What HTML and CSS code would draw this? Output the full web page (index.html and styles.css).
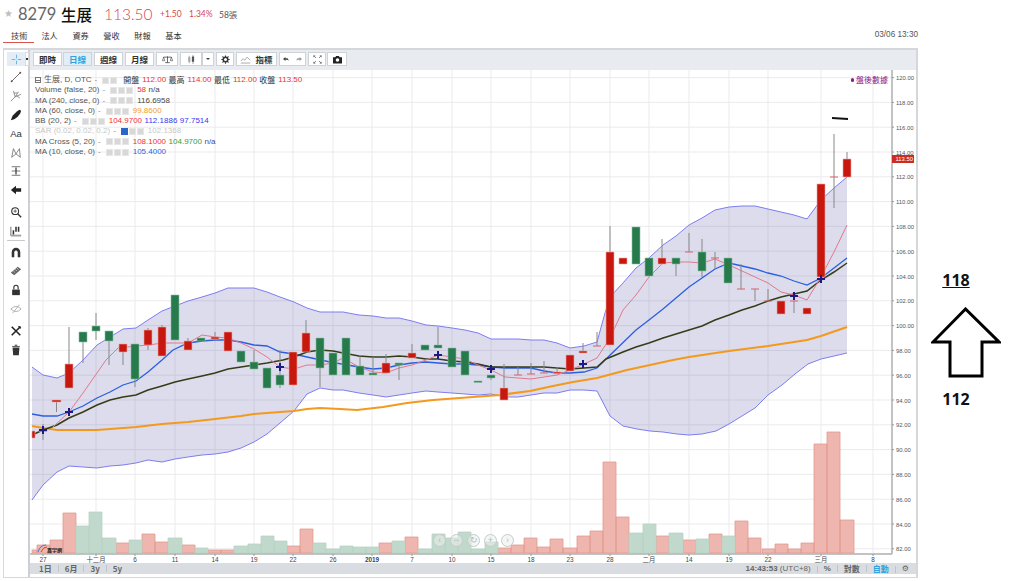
FILE: index.html
```html
<!DOCTYPE html>
<html lang="zh-Hant">
<head>
<meta charset="utf-8">
<title>8279 生展</title>
<link rel="stylesheet" href="styles.css">
</head>
<body>
<div class="page">
  <header class="quote">
    <span class="star">★</span>
    <span class="code">8279</span>
    <span class="name">生展</span>
    <span class="price">113.50</span>
    <span class="chg">+1.50</span>
    <span class="pct">1.34%</span>
    <span class="vol">58張</span>
  </header>
  <nav class="tabs">
    <a class="tab tab-on">技術</a><a class="tab">法人</a><a class="tab">資券</a><a class="tab">營收</a><a class="tab">財報</a><a class="tab">基本</a>
    <span class="stamp">03/06 13:30</span>
  </nav>
  <div class="main">
    <section class="widget">
      <aside class="tools">
        <div class="tool tool-on"><svg viewBox="0 0 14 14" class="ic"><path d="M7 1v4.500M7 8.500V13M1 7h4.500M8.500 7H13" stroke="#5cb4e8" stroke-width="1.200" fill="none"/></svg><span class="caret"></span></div>
        <div class="tool"><svg viewBox="0 0 14 14" class="ic"><path d="M2 12L12 2" stroke="#555" fill="none"/><circle cx="2" cy="12" r="1.100" fill="#555"/><circle cx="12" cy="2" r="1.100" fill="#555"/></svg></div>
        <div class="tool"><svg viewBox="0 0 14 14" class="ic"><path d="M1 13l5-5M6 8L4 1M6 8l4-6M6 8l7-3M4.500 3.500L9 3.500M7.500 6.500l4 3" stroke="#777" stroke-width=".9" fill="none"/></svg></div>
        <div class="tool"><svg viewBox="0 0 14 14" class="ic"><path d="M1 13l2-5 5-5 3-2 2 1-1 3-3 4-4 3z" fill="#222"/></svg></div>
        <div class="tool tool-text">Aa</div>
        <div class="tool"><svg viewBox="0 0 14 14" class="ic"><path d="M2 12L4 2l3 6 4-6 1 10M2 12l5-4 5 4" stroke="#666" stroke-width=".9" fill="none"/></svg></div>
        <div class="tool"><svg viewBox="0 0 14 14" class="ic"><path d="M2 2h10M2 7h10M2 12h10" stroke="#666" fill="none"/><path d="M7 3v8" stroke="#333" stroke-width="1.400"/></svg></div>
        <div class="tool"><svg viewBox="0 0 14 14" class="ic"><path d="M1 7l6-5v3h6v4H7v3z" fill="#222"/></svg></div>
        <div class="tool tool-gap"><svg viewBox="0 0 14 14" class="ic"><circle cx="6" cy="6" r="4" stroke="#333" stroke-width="1.200" fill="none"/><path d="M9 9l4 4" stroke="#333" stroke-width="1.600"/><path d="M4 6h4M6 4v4" stroke="#333" stroke-width=".8"/></svg></div>
        <div class="tool"><svg viewBox="0 0 14 14" class="ic"><path d="M1 2v10h12" stroke="#777" stroke-width="1.200" fill="none"/><path d="M4 6v5M7 2v6M10 2v6" stroke="#333" stroke-width="1.800"/><path d="M1 12h12v1.500H1z" fill="#aaa"/></svg></div>
        <div class="tool-sep"></div>
        <div class="tool"><svg viewBox="0 0 14 14" class="ic"><path d="M2 12V6a5 5 0 0 1 10 0v6H9V6a2 2 0 0 0-4 0v6z" fill="#333"/></svg></div>
        <div class="tool"><svg viewBox="0 0 14 14" class="ic"><path d="M1 9l8-7 4 3-8 7z" fill="#666"/><path d="M4 7l2 2M6 5l2 2M8 3.500l2 2" stroke="#fff" stroke-width=".7"/></svg></div>
        <div class="tool"><svg viewBox="0 0 14 14" class="ic"><path d="M2.500 6.500h9V13h-9z" fill="#333"/><path d="M4.500 6.500V4a2.500 2.500 0 0 1 5 0v2.500" stroke="#333" stroke-width="1.300" fill="none"/></svg></div>
        <div class="tool"><svg viewBox="0 0 14 14" class="ic"><path d="M1 7q6-6 12 0-6 6-12 0z" stroke="#aaa" fill="none"/><path d="M3 12L11 2" stroke="#aaa"/></svg></div>
        <div class="tool tool-gap"><svg viewBox="0 0 14 14" class="ic"><path d="M2 2l10 10M12 2L2 12" stroke="#222" stroke-width="1.800"/><path d="M9 1l4 1-1 3z" fill="#222"/></svg></div>
        <div class="tool"><svg viewBox="0 0 14 14" class="ic"><path d="M3 4h8l-.7 9H3.700z" fill="#333"/><path d="M2.500 2.500h9v1h-9zM5.500 1h3v1h-3z" fill="#333"/></svg></div>
      </aside>
      <div class="board">
        <div class="topbar">
          <button class="btn btn-word btn-first">即時</button>
          <button class="btn btn-word btn-on">日線</button>
          <button class="btn btn-word">週線</button>
          <button class="btn btn-word">月線</button>
          <button class="btn btn-ic22"><svg viewBox="0 0 14 10" class="bi"><path d="M7 1v8M4 9h6M2 2h10" stroke="#333" stroke-width=".9" fill="none"/><path d="M2 2L.5 6.500h3zM12 2l-1.500 4.500h3z" stroke="#333" stroke-width=".7" fill="none"/></svg></button>
          <div class="split">
            <button class="btn btn-ic21"><svg viewBox="0 0 14 12" class="bi"><path d="M4 1v10M9 0v12" stroke="#888"/><path d="M2.500 3h3v6h-3z" fill="#aaa"/><path d="M7.500 2h3v7h-3z" fill="#555"/></svg></button>
            <button class="btn btn-drop"><span class="dn"></span></button>
          </div>
          <button class="btn btn-ic18"><svg viewBox="0 0 12 12" class="gear"><circle cx="6" cy="6" r="3" stroke="#333" stroke-width="2" fill="none"/><path d="M6 .5v2M6 9.500v2M.5 6h2M9.500 6h2M2 2l1.500 1.500M8.500 8.500L10 10M10 2L8.500 3.500M3.500 8.500L2 10" stroke="#333" stroke-width="1.500"/></svg></button>
          <button class="btn btn-ind"><svg viewBox="0 0 14 10" class="bi"><path d="M1 7l3-3 2 2 3-4 4 4M1 9.500h12" stroke="#888" stroke-width=".9" fill="none"/></svg><span>指標</span></button>
          <div class="pair">
            <button class="btn btn-half"><svg viewBox="0 0 10 8" class="ar"><path d="M0 4l3.500-3v2h3l2 3-3-1H3.500v2z" fill="#444"/></svg></button>
            <button class="btn btn-half"><svg viewBox="0 0 10 8" class="ar"><path d="M10 4L6.500 1v2h-3l-2 3 3-1h2v2z" fill="#999"/></svg></button>
          </div>
          <button class="btn btn-ic18 btn-fs"><svg viewBox="0 0 12 12" class="fs"><path d="M1 1l3 3M1 1h2M1 1v2M11 1L8 4M11 1H9M11 1v2M1 11l3-3M1 11h2M1 11V9M11 11L8 8M11 11H9M11 11V9" stroke="#555" stroke-width=".9" fill="none"/></svg></button>
          <button class="btn btn-ic20"><svg viewBox="0 0 12 10" class="bi"><path d="M1 2.500h2.500l1-1.500h3l1 1.500H11v7H1z" fill="#222"/><circle cx="6" cy="5.500" r="2" fill="#fff"/></svg></button>
        </div>
        <div class="canvas">
          <svg class="plot" viewBox="30 70 886 494" width="886" height="494">
            <path class="grid" d="M30 77.600H892M30 102.400H892M30 127.200H892M30 152H892M30 176.800H892M30 201.600H892M30 226.400H892M30 251.200H892M30 276H892M30 300.800H892M30 325.600H892M30 350.400H892M30 375.200H892M30 400H892M30 424.800H892M30 449.600H892M30 474.400H892M30 499.200H892M30 524H892M30 548.800H892"/>
            <path class="grid" d="M43 70V554M96 70V554M135 70V554M175 70V554M215 70V554M254 70V554M293 70V554M333 70V554M372 70V554M412 70V554M452 70V554M491 70V554M531 70V554M570 70V554M610 70V554M649 70V554M689 70V554M729 70V554M768 70V554M821 70V554M873 70V554"/>

            <path class="band" d="M32 367L43 375 57 378 69 373 83 360 97 345 110 337 123 329 136 328 148 320 162 311 175 306 188 301 202 297 215 293 228 288 241 288 254 288 267 292 280 297 294 302 307 308 320 312 333 312 343 312 359 315 373 316 386 318 399 318 412 321 426 325 438 326 452 328 465 330 478 333 491 339 505 339 518 339 531 340 544 340 557 343 570 348 584 346 597 342 605 313 610 297 623 283 636 268 649 258 663 245 676 236 689 225 702 218 715 210 729 207 742 206 755 206 768 209 781 212 794 215 807 219 821 200 834 188 847 177V353L821 359 808 364 795 374 782 385 768 395 755 408 742 416 729 424 716 431 702 434 689 435 677 434 663 432 650 431 637 429 623 426 610 416 597 391 584 390 570 390 557 393 544 393 531 395 518 397 505 397 491 394 478 395 465 394 452 393 438 392 426 391 412 393 399 395 386 397 373 395 359 393 343 390 333 390 320 388 307 394 294 411 280 423 267 434 254 442 241 448 228 452 215 454 202 455 188 457 175 459 162 462 148 460 136 463 123 465 110 466 97 468 83 467 69 466 57 472 43 485 32 500z"/>
            <path class="bb" d="M32 367L43 375 57 378 69 373 83 360 97 345 110 337 123 329 136 328 148 320 162 311 175 306 188 301 202 297 215 293 228 288 241 288 254 288 267 292 280 297 294 302 307 308 320 312 333 312 343 312 359 315 373 316 386 318 399 318 412 321 426 325 438 326 452 328 465 330 478 333 491 339 505 339 518 339 531 340 544 340 557 343 570 348 584 346 597 342 605 313 610 297 623 283 636 268 649 258 663 245 676 236 689 225 702 218 715 210 729 207 742 206 755 206 768 209 781 212 794 215 807 219 821 200 834 188 847 177"/>
            <path class="bb" d="M32 500L43 485 57 472 69 466 83 467 97 468 110 466 123 465 136 463 148 460 162 462 175 459 188 457 202 455 215 454 228 452 241 448 254 442 267 434 280 423 294 411 307 394 320 388 333 390 343 390 359 393 373 395 386 397 399 395 412 393 426 391 438 392 452 393 465 394 478 395 491 394 505 397 518 397 531 395 544 393 557 393 570 390 584 390 597 391 610 416 623 426 637 429 650 431 663 432 677 434 689 435 702 434 716 431 729 424 742 416 755 408 768 395 782 385 795 374 808 364 821 359 847 353"/>

            <g class="vol-red">
              <path d="M32 550h5v3h-5zM37 545h13v8H37zM50 540h13v13H50zM63 513h13v40H63zM116 543h13v10h-13zM142 534h13v19h-13zM155 542h13v11h-13zM182 545h13v8h-13zM208 550h13v3h-13zM221 550h13v3h-13zM287 546h13v7h-13zM300 529h13v24h-13zM379 543h13v10h-13zM405 537h13v16h-13zM498 548h13v5h-13zM511 545h13v8h-13zM524 538h13v15h-13zM537 547h13v6h-13zM550 539h13v14h-13zM563 548h14v5h-14zM577 536h13v17h-13zM590 531h13v22h-13zM603 462h13v91h-13zM616 517h13v36h-13zM656 536h13v17h-13zM683 540h13v13h-13zM709 534h13v19h-13zM735 521h13v32h-13zM748 538h13v15h-13zM762 549h13v4h-13zM775 544h13v9h-13zM788 549h13v4h-13zM801 543h13v10h-13zM814 444h13v109h-13zM827 432h13v121h-13zM840 520h14v33h-14z"/>
            </g>
            <g class="vol-green">
              <path d="M76 526h13v27H76zM89 512h13v41H89zM102 538h14v15h-14zM129 540h13v13h-13zM168 538h14v15h-14zM195 548h13v5h-13zM234 546h14v7h-14zM248 544h13v9h-13zM261 536h13v17h-13zM274 541h13v12h-13zM313 543h13v10h-13zM326 549h14v4h-14zM340 546h13v7h-13zM353 547h13v6h-13zM366 547h13v6h-13zM392 541h13v12h-13zM418 549h14v4h-14zM432 534h13v19h-13zM445 538h13v15h-13zM458 532h13v21h-13zM471 549h14v4h-14zM485 542h13v11h-13zM629 533h14v20h-14zM643 524h13v29h-13zM669 533h14v20h-14zM696 539h13v14h-13zM722 536h13v17h-13z"/>
            </g>

            <path class="ma60" d="M32 426L43 428 57 430 69 430 97 430 110 429 123 428 136 427 162 424 188 422 215 419 241 416 254 414 280 412 294 411 307 409 320 408 340 409 357 410 383 407 407 403 433 400 473 397 500 395 530 391 553 386 573 382 597 378 627 370 673 360 689 357 729 351 768 346 807 340 821 336 847 327"/>
            <path class="ma10" d="M32 414L43 416 57 416 69 412 83 406 97 398 110 392 123 385 136 381 148 372 162 360 173 350 188 343 202 341 215 340 228 340 241 342 254 345 267 346 280 352 294 354 307 357 330 362 359 367 373 369 386 368 399 365 412 363 426 362 438 363 452 364 465 364 478 365 491 367 505 368 518 368 531 368 544 371 557 373 570 373 584 372 597 368 605 360 636 330 649 320 663 309 676 298 689 287 702 278 715 269 729 263 742 266 755 269 768 273 781 276 794 281 807 285 821 278 834 268 847 258"/>
            <path class="ma20" d="M32 435L43 430 57 425 69 418 83 412 97 405 110 400 123 397 136 395 148 390 162 386 175 382 188 379 202 376 215 373 228 369 241 367 254 365 267 363 283 360 294 357 307 352 320 350 333 351 343 353 359 356 373 357 386 357 399 356 412 357 426 359 438 359 452 361 465 362 478 364 491 367 505 367 518 367 531 367 544 367 557 368 570 369 584 368 597 367 606 359 623 352 636 347 649 343 663 338 676 334 689 330 702 326 715 320 729 315 742 310 755 306 768 301 781 297 794 294 807 291 821 280 834 272 847 263"/>
            <path class="ma5" d="M53 427L69 412 83 393 97 373 106 360 118 348 136 346 149 345 162 343 175 343 188 343 202 335 215 337 228 338 241 343 254 349 267 357 280 367 294 369 307 365 320 365 333 363 343 358 359 367 373 372 386 373 399 368 412 365 426 360 438 355 452 357 465 359 478 365 491 370 505 377 518 378 531 379 544 377 557 375 570 370 584 364 597 358 610 338 623 310 636 295 649 277 663 263 676 262 689 262 702 263 715 259 729 265 742 271 755 277 768 283 781 292 794 295 807 300 821 277 834 252 847 225"/>

            <path class="wick" d="M43 424V440M56.500 401V412M69 327V364M83 342V363M96 313V340M109 341V365M123 352V365M135 379V387M148 328V350M162 325V327M188 338V341M215 332V337M254 350V362M280 350V388M306 320V333M320 368V387M360 357V366M373 357V373M386 354V363M399 365V380M412 344V353M438 327V345M491 378V380M504 364V388M518 367V375M531 363V374M544 361V373M557 367V372M583 343V351M597 332V346M610 226V252M662 239V258M676 264V276M689 233V252M702 239V277M715 252V269M741 264V289M755 289V301M768 289V301M794 301V313M834 134V208M847 152V159"/>
            <path class="up" d="M32 431h3v7h-3zM39 430h8v1.500h-8zM52 400h9v2h-9zM65 364h8v24h-8zM119 344h8v8h-8zM144 330h8v15h-8zM158 327h8v29h-8zM184 341h8v9h-8zM211 337h8v2h-8zM224 332h8v19h-8zM289 352h8v33h-8zM302 333h8v19h-8zM382 363h8v10h-8zM408 353h8v5h-8zM500 388h8v12h-8zM553 372h8v1.500h-8zM566 355h8v16h-8zM579 351h8v2h-8zM606 252h8v93h-8zM619 258h8v6h-8zM658 258h8v6h-8zM777 301h8v13h-8zM803 308h8v6h-8zM817 184h8v93h-8zM843 159h8v18h-8z"/>
            <path class="down" d="M79 332h8v10h-8zM92 326h8v5h-8zM105 331h8v10h-8zM131 344h8v35h-8zM171 295h8v45h-8zM197 338h8v3h-8zM237 351h8v11h-8zM250 362h8v7h-8zM263 368h8v20h-8zM276 375h8v10h-8zM316 338h8v30h-8zM329 353h8v22h-8zM342 338h8v37h-8zM356 366h8v9h-8zM369 373h8v2h-8zM395 363h8v2h-8zM421 345h8v5h-8zM434 345h8v3h-8zM448 348h8v19h-8zM461 351h8v24h-8zM474 381h8v1.500h-8zM487 375h8v3h-8zM632 227h8v37h-8zM645 258h8v18h-8zM672 258h8v6h-8zM698 252h8v19h-8zM724 258h8v25h-8z"/>
            <path class="doji" d="M514 375h8M527 374h8M540 373h8M593 346h8M685 252h8M711 258h8M737 289h8M751 289h8M764 301h8M790 301h8M830 177h8"/>
            <path class="plus" d="M39 430h8M43 426v8M65 412h8M69 408v8M276 367h8M280 363v8M434 355h8M438 351v8M487 369h8M491 365v8M579 364h8M583 360v8M790 296h8M794 292v8M817 279h8M821 275v8"/>
            <path class="pen" d="M832 118l16 1"/>

            <path class="axis" d="M892 70V554M30 554H892"/>
            <path class="tick" d="M892 77.600h2M892 102.400h2M892 127.200h2M892 152h2M892 176.800h2M892 201.600h2M892 226.400h2M892 251.200h2M892 276h2M892 300.800h2M892 325.600h2M892 350.400h2M892 375.200h2M892 400h2M892 424.800h2M892 449.600h2M892 474.400h2M892 499.200h2M892 524h2M892 548.800h2M43 554v2M96 554v2M135 554v2M175 554v2M215 554v2M254 554v2M293 554v2M333 554v2M372 554v2M412 554v2M452 554v2M491 554v2M531 554v2M570 554v2M610 554v2M649 554v2M689 554v2M729 554v2M768 554v2M821 554v2M873 554v2"/>
            <g class="yl">
              <text x="896" y="80">120.00</text><text x="896" y="105">118.00</text><text x="896" y="129.500">116.00</text><text x="896" y="154.500">114.00</text><text x="896" y="179">112.00</text><text x="896" y="204">110.00</text><text x="896" y="229">108.00</text><text x="896" y="253.500">106.00</text><text x="896" y="278.500">104.00</text><text x="896" y="303">102.00</text><text x="896" y="328">100.00</text><text x="896" y="353">98.00</text><text x="896" y="377.500">96.00</text><text x="896" y="402.500">94.00</text><text x="896" y="427">92.00</text><text x="896" y="452">90.00</text><text x="896" y="477">88.00</text><text x="896" y="501.500">86.00</text><text x="896" y="526.500">84.00</text><text x="896" y="551">82.00</text>
            </g>
            <path class="tag" d="M892 155h22v8h-22z"/>
            <text class="tagt" x="895.500" y="161.200">113.50</text>
            <g class="xl">
              <text x="43" y="562">27</text><text x="96" y="562">十二月</text><text x="135" y="562">6</text><text x="175" y="562">11</text><text x="215" y="562">14</text><text x="254" y="562">19</text><text x="293" y="562">22</text><text x="333" y="562">26</text><text class="yr" x="372" y="562">2019</text><text x="412" y="562">7</text><text x="452" y="562">10</text><text x="491" y="562">15</text><text x="531" y="562">18</text><text x="570" y="562">23</text><text x="610" y="562">28</text><text x="649" y="562">二月</text><text x="689" y="562">14</text><text x="729" y="562">19</text><text x="768" y="562">22</text><text x="821" y="562">三月</text><text x="873" y="562">8</text>
            </g>
            <g class="logo">
              <path d="M38 552q2-7 8-7" stroke="#3a7bd5" fill="none"/><path d="M41 552q2-5 6-5" stroke="#d8402a" fill="none"/>
              <text class="logot" x="47" y="552">嘉宇網</text>
            </g>
          </svg>

          <div class="legend">
            <div class="lrow lrow-top"><span class="minus"></span><span>生展, D, OTC</span><span class="dash">-</span><span class="sqs"><i></i><i></i></span><span class="zh">開盤</span><b class="red">112.00</b><span class="zh">最高</span><b class="red">114.00</b><span class="zh">最低</span><b class="red">112.00</b><span class="zh">收盤</span><b class="red">113.50</b></div>
            <div class="lrow"><span>Volume (false, 20)</span><span class="dash">-</span><span class="sqs"><i></i><i></i><i></i></span><b class="red">58</b><b class="dark">n/a</b></div>
            <div class="lrow"><span>MA (240, close, 0)</span><span class="dash">-</span><span class="sqs"><i></i><i></i><i></i></span><b class="dark">116.6958</b></div>
            <div class="lrow"><span>MA (60, close, 0)</span><span class="dash">-</span><span class="sqs"><i></i><i></i><i></i></span><b class="orange">99.8600</b></div>
            <div class="lrow"><span>BB (20, 2)</span><span class="dash">-</span><span class="sqs"><i></i><i></i><i></i></span><b class="red">104.9700</b><b class="blue">112.1886</b><b class="blue">97.7514</b></div>
            <div class="lrow lrow-off"><span>SAR (0.02, 0.02, 0.2)</span><span class="dash">-</span><span class="sqs"><i class="on"></i><i></i><i></i></span><b>102.1368</b></div>
            <div class="lrow"><span>MA Cross (5, 20)</span><span class="dash">-</span><span class="sqs"><i></i><i></i><i></i></span><b class="red">108.1000</b><b class="green">104.9700</b><b class="navy">n/a</b></div>
            <div class="lrow"><span>MA (10, close, 0)</span><span class="dash">-</span><span class="sqs"><i></i><i></i><i></i></span><b class="mid">105.4000</b></div>
          </div>
          <div class="after"><span class="dot"></span>盤後數據</div>
          <div class="pager"><span class="pg">‹</span><span class="pg">−</span><span class="pg">↻</span><span class="pg">+</span><span class="pg">›</span></div>
        </div>
        <footer class="bottombar">
          <div class="ranges"><span>1日</span><span>6月</span><span>3y</span><span>5y</span></div>
          <div class="opts"><span class="clock">14:43:53 <em>(UTC+8)</em></span><span>%</span><span>對數</span><span class="auto">自動</span><span class="cog">⚙</span></div>
        </footer>
      </div>
    </section>
    <aside class="note">
      <span class="hi">118</span>
      <svg class="arrow" viewBox="0 0 70 72" width="70" height="72"><path d="M34.500 2L2 35h17v34h32V35h17z"/></svg>
      <span class="lo">112</span>
    </aside>
  </div>
</div>
</body>
</html>
```
FILE: styles.css
```css
* { box-sizing: border-box; }
html, body { margin: 0; padding: 0; background: #fff; }
body { font-family: "Liberation Sans", "Noto Sans CJK TC", sans-serif; color: #333; }
.page { width: 1024px; height: 581px; display: flex; flex-direction: column; overflow: hidden; }

.quote { height: 28px; padding: 0 0 1px 4px; display: flex; align-items: center; font-family: Lato, "Noto Sans CJK TC", sans-serif; }
.star { font-family: "DejaVu Sans", sans-serif; font-size: 10px; color: #bdbdbd; width: 14px; }
.code { font-size: 16.500px; color: #666; width: 43px; }
.name { font-size: 15.500px; color: #111; width: 43px; font-family: "Noto Sans CJK TC", sans-serif; font-weight: 500; }
.price { font-size: 15.500px; font-weight: 300; color: #d8464e; width: 56px; }
.chg { font-size: 8.500px; color: #d8464e; width: 29px; }
.pct { font-size: 8.500px; color: #d8464e; width: 30px; }
.vol { font-size: 8.500px; color: #555; }

.tabs { height: 20px; padding-left: 3px; display: flex; align-items: flex-start; position: relative; }
.tab { height: 15px; padding: 1px 0 0; margin-right: 14.600px; font: 8.200px/12px "Noto Sans CJK TC", sans-serif; color: #333; }
.tab-on { border-bottom: 1px solid #d9534f; margin-right: 7px; padding: 1px 7px 0 8px; }
.stamp { margin-left: auto; margin-right: 106px; font: 8.200px/13px "Liberation Sans", sans-serif; color: #555; }

.main { display: flex; height: 533px; }
.widget { width: 915px; height: 530px; margin-left: 3px; border: 1px solid #d5d7db; border-top: 2px solid #d5d7db; border-right-width: 2px; display: flex; }
.tools { width: 26px; flex: none; border-right: 2px solid #ccd0d5; display: flex; flex-direction: column; background: #fff; }
.tool { height: 18.800px; display: flex; align-items: center; justify-content: center; position: relative; }
.tool-on { height: 14px; margin: 2px 3px 2px; background: #e4edf5; }
.tool-gap { margin-top: 3px; }
.tool-text { font: 9.500px "Liberation Sans", sans-serif; color: #333; }
.tool-sep { height: 1px; background: #c9c9c9; margin: 0 3px 2px; }
.ic { width: 12px; height: 12px; display: block; }
.tool-on .ic { width: 11px; height: 11px; }
.caret { position: absolute; right: -4px; top: 0; height: 14px; width: 4px; background: #fff; border: 1px solid #ddd; }
.caret::after { content: ""; position: absolute; left: 0; top: 5px; width: 2px; height: 2px; background: #333; }

.board { flex: 1; min-width: 0; display: flex; flex-direction: column; }
.topbar { height: 20px; flex: none; background: #e8ecf0; display: flex; align-items: flex-start; padding: 2px 0 0 3px; gap: 2px; }
.btn { height: 14px; padding: 0; margin: 0; background: #fff; border: 1px solid #cfd3d8; display: flex; align-items: center; justify-content: center; gap: 4px; font: 700 8.500px "Noto Sans CJK TC", sans-serif; color: #333; }
.btn-word { width: 29px; }
.btn-first { margin-right: -1px; }
.btn-on { background: #e2eef6; color: #2ea3de; }
.btn-ic22 { width: 22px; }
.btn-ic21 { width: 22px; }
.btn-ic20 { width: 20px; }
.btn-ic18 { width: 18px; }
.btn-fs { margin-right: -1px; }
.btn-drop { width: 12px; }
.btn-ind { width: 41px; }
.btn-half { width: 13px; border: 0; }
.split { display: flex; }
.pair { display: flex; width: 27px; border: 1px solid #cfd3d8; height: 14px; background: #fff; align-items: center; }
.pair .btn { height: 12px; }
.bi { width: 11px; height: 9px; display: block; }
.gear { width: 9px; height: 9px; display: block; }
.fs { width: 9px; height: 9px; display: block; }
.ar { width: 7px; height: 6px; display: block; }
.dn { border: 2px solid transparent; border-top: 2.500px solid #444; border-bottom: 0; }

.canvas { position: relative; flex: 1; min-height: 0; overflow: hidden; background: #fff; }
.plot { display: block; }
.grid { stroke: #ebebee; stroke-width: 1; fill: none; }
.band { fill: #5050a0; opacity: .2; }
.bb { fill: none; stroke: #7d7df2; stroke-width: 1; }
.vol-red path { fill: #eeb6ae; stroke: #e29a90; stroke-width: .8; }
.vol-green path { fill: #c1d9cc; stroke: #b7d3c4; stroke-width: .8; }
.ma60 { fill: none; stroke: #f39a1e; stroke-width: 2.200; }
.ma10 { fill: none; stroke: #2a5fe0; stroke-width: 1.300; }
.ma20 { fill: none; stroke: #343d18; stroke-width: 1.500; }
.ma5 { fill: none; stroke: #e2788c; stroke-width: 1; }
.wick { stroke: #888; stroke-width: 1; fill: none; }
.up { fill: #c8170f; stroke: #eaa79f; stroke-width: .6; }
.down { fill: #267a4c; stroke: #8fbfa4; stroke-width: .6; }
.doji { stroke: #d9606a; stroke-width: 1; fill: none; }
.plus { stroke: #1b1b85; stroke-width: 2; fill: none; }
.pen { stroke: #111; stroke-width: 2; fill: none; }
.axis { stroke: #aeb0b3; stroke-width: 1.500; fill: none; }
.tick { stroke: #999; stroke-width: 1; fill: none; }
.yl text { font: 5.900px "Liberation Sans", sans-serif; fill: #555; }
.tag { fill: #cf2a22; }
.tagt { font: 5.900px "Liberation Sans", sans-serif; fill: #fff; }
.xl text { font: 6.400px "Liberation Sans", "Noto Sans CJK TC", sans-serif; fill: #444; text-anchor: middle; }
.xl .yr { font-weight: 700; }
.logot { font: 700 5px "Noto Sans CJK TC", sans-serif; fill: #222; }

.legend { position: absolute; left: 5px; top: 5px; font-size: 8px; line-height: 10.300px; color: #555; }
.lrow { display: flex; align-items: center; height: 10.300px; white-space: nowrap; }
.lrow b { font-weight: 400; margin-right: 2.500px; }
.lrow-off, .lrow-off b { color: #c8c8c8; }
.minus { width: 6px; height: 6px; margin-right: 3px; border: 1px solid #777; background: linear-gradient(#777, #777) center / 4px 1px no-repeat; }
.dash { margin: 0 5px 0 3px; color: #888; }
.sqs { display: flex; gap: 1px; margin-right: 4px; }
.lrow-top .sqs { margin-right: 6px; }
.sqs i { width: 7px; height: 7px; background: #d8d8d8; border: 1px solid #e6e6e6; display: block; }
.sqs .on { background: #2a66c8; border-color: #2a66c8; }
.zh { font-family: "Noto Sans CJK TC", sans-serif; font-size: 8px; color: #333; margin-right: 3px; }
.red { color: #ef3030; }
.dark { color: #444; }
.orange { color: #f0a030; }
.blue { color: #3838f0; }
.green { color: #2e9e3e; }
.navy { color: #4646a8; }
.mid { color: #2a66dc; }

.after { position: absolute; right: 28px; top: 5px; font: 8px/10px "Noto Sans CJK TC", sans-serif; color: #8a1a8a; display: flex; align-items: center; gap: 2px; }
.dot { width: 3.500px; height: 3.500px; border-radius: 50%; background: #8a1a8a; }
.pager { position: absolute; left: 403px; top: 464px; display: flex; gap: 4px; }
.pg { width: 13px; height: 13px; border-radius: 50%; border: 1px solid #c4ccc6; background: rgba(235,238,236,.55); color: #b4bbb6; font: 9px/11px "Liberation Sans", sans-serif; text-align: center; }

.bottombar { height: 11px; flex: none; margin-bottom: 3px; background: #d9dde1; display: flex; justify-content: space-between; align-items: center; padding: 0 7px 0 9px; font-size: 8px; font-weight: 700; color: #666; white-space: nowrap; }
.ranges { display: flex; gap: 13px; }
.ranges span { font-family: "Noto Sans CJK TC", sans-serif; position: relative; }
.ranges span + span::before, .opts span + span::before { content: ""; position: absolute; left: -7px; top: 2px; height: 7px; width: 1px; background: #bfc4c9; }
.opts { display: flex; gap: 13px; font-family: "Liberation Sans", "Noto Sans CJK TC", sans-serif; align-items: center; }
.opts span { position: relative; }
.clock em { font-style: normal; font-weight: 400; }
.auto { color: #2ea3de; }
.cog { font-family: "DejaVu Sans", sans-serif; font-weight: 400; }

.note { flex: 1; display: flex; flex-direction: column; align-items: center; font-family: "Noto Sans", sans-serif; font-weight: 700; font-size: 16px; color: #111; }
.hi { margin-top: 222px; line-height: 20px; text-decoration: underline; margin-left: -30px; margin-bottom: 17px; }
.arrow { margin-left: -10px; display: block; }
.arrow path { fill: #fff; stroke: #000; stroke-width: 3; }
.lo { line-height: 20px; margin-top: 10px; margin-left: -30px; }
```
